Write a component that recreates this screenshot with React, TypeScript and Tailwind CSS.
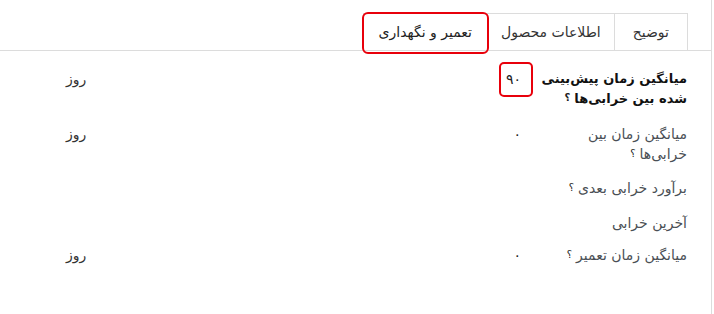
import React from "react";

const Q = () => <sup className="text-[10px] text-[#222] mr-1 relative top-[-2px]">؟</sup>;

function Row({
  label,
  bold,
  value,
  unit,
  h,
  highlight,
}: {
  label: React.ReactNode;
  bold?: boolean;
  value?: string;
  unit?: boolean;
  h: string;
  highlight?: boolean;
}) {
  return (
    <div className={`flex ${h}`}>
      <div
        className={`w-[150px] shrink-0 leading-[20px] whitespace-nowrap ${
          bold ? "font-bold text-[#111] text-[13px]" : "text-[#4a4f55]"
        }`}
      >
        {label}
      </div>
      <div className="flex-1 flex items-start justify-between pr-[16px]">
        <div className="relative leading-[20px] text-[#222] w-[30px]">
          {value}
          {highlight && (
            <div className="absolute right-[-12px] top-[-7px] w-[34px] h-[35px] border-2 border-[#e8000b] rounded-[5px]" />
          )}
        </div>
        {unit && <div className="leading-[20px] text-[#333]">روز</div>}
      </div>
    </div>
  );
}

export default function App() {
  return (
    <div
      dir="rtl"
      className="w-[712px] h-[314px] border-r border-r-[#dcdcdc] bg-white text-[14px]"
      style={{ fontFamily: '"DejaVu Sans", sans-serif' }}
    >
      <div className="pt-[13px] border-b border-[#dcdcdc] pr-[23px] flex">
        <div className="h-[37px] px-[18px] flex items-center border border-b-0 border-[#dcdcdc] text-[#333] -mb-px bg-white">
          توضیح
        </div>
        <div className="h-[37px] px-[13px] flex items-center border-t border-l border-[#dcdcdc] text-[#333]">
          اطلاعات محصول
        </div>
        <div className="relative h-[37px] px-[15px] flex items-center border-t border-l border-[#dcdcdc] text-[#222] bg-white -mb-px">
          تعمیر و نگهداری
          <div className="absolute -left-[2px] -right-[2px] top-[-2px] h-[42px] border-2 border-[#e8000b] rounded-[6px]" />
        </div>
      </div>
      <div className="pt-[18px] pr-[24px] pl-[66px]">
        <Row
          h="h-[55px]"
          bold
          label={
            <>
              میانگین زمان پیش‌بینی
              <br />
              شده بین خرابی‌ها
              <Q />
            </>
          }
          value="۹۰"
          unit
          highlight
        />
        <Row
          h="h-[54px]"
          label={
            <>
              میانگین زمان بین
              <br />
              خرابی‌ها
              <Q />
            </>
          }
          value="۰"
          unit
        />
        <Row
          h="h-[35px]"
          label={
            <>
              برآورد خرابی بعدی
              <Q />
            </>
          }
        />
        <Row h="h-[32px]" label={<>آخرین خرابی</>} />
        <Row
          h="h-[32px]"
          label={
            <>
              میانگین زمان تعمیر
              <Q />
            </>
          }
          value="۰"
          unit
        />
      </div>
    </div>
  );
}
